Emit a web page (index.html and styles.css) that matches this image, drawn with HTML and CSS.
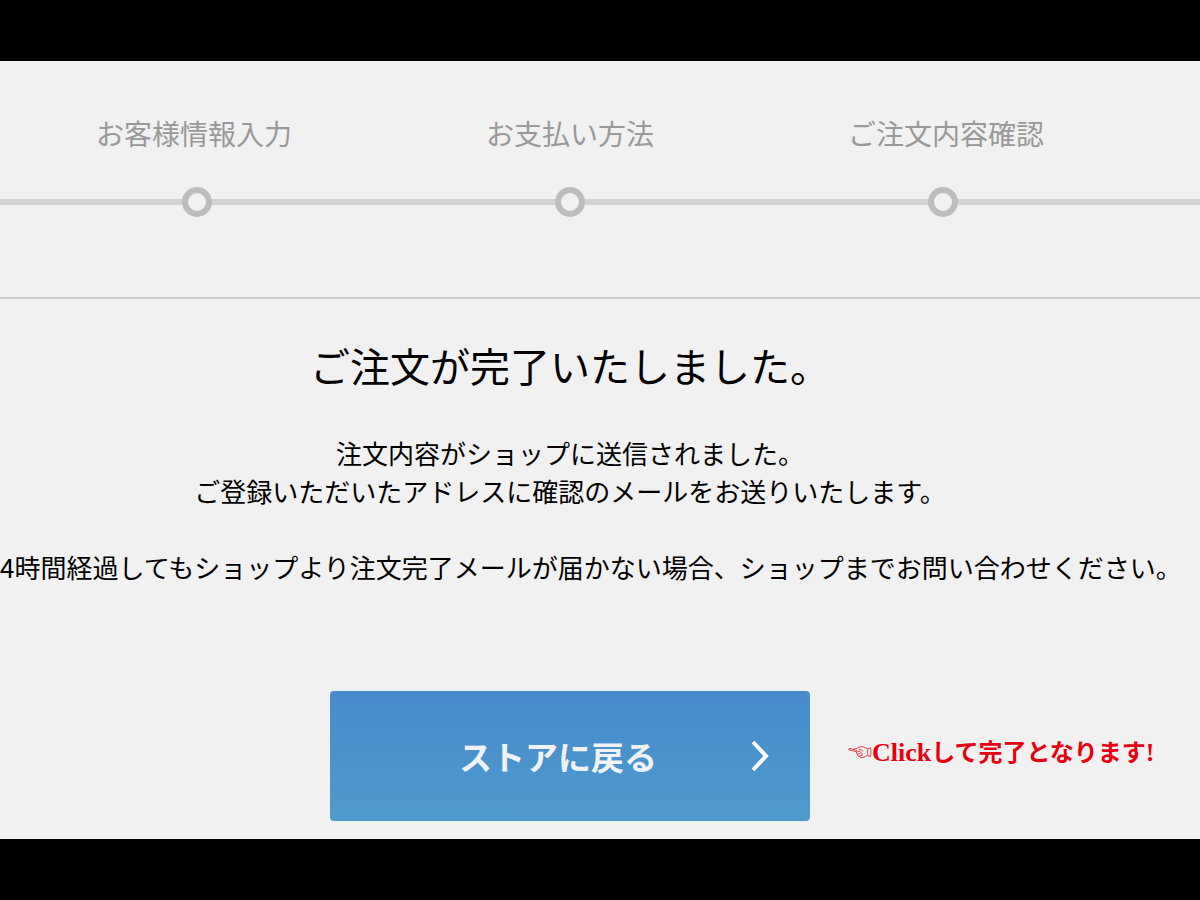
FILE: index.html
```html
<!DOCTYPE html>
<html lang="ja">
<head>
  <meta charset="UTF-8" />
  <meta name="viewport" content="width=device-width, initial-scale=1.0" />
  <title>ご注文完了</title>
  <link rel="stylesheet" href="styles.css">
</head>
<body>
  <main class="page">
    <header class="progress">
      <ol class="step-labels">
        <li>お客様情報入力</li>
        <li>お支払い方法</li>
        <li>ご注文内容確認</li>
      </ol>
      <div class="step-line">
        <span class="dot"></span>
        <span class="dot"></span>
        <span class="dot"></span>
      </div>
    </header>

    <section class="complete">
      <h1>ご注文が完了いたしました。</h1>
      <p>注文内容がショップに送信されました。<br>ご登録いただいたアドレスに確認のメールをお送りいたします。</p>
      <p>4時間経過してもショップより注文完了メールが届かない場合、ショップまでお問い合わせください。</p>

      <div class="actions">
        <button type="button" class="back-button">
          <span>ストアに戻る</span>
          <svg class="arrow" viewBox="0 0 18 32" aria-hidden="true">
            <path d="M2 2 L15 16 L2 30" />
          </svg>
        </button>
        <div class="note">
          <svg class="hand" viewBox="0 0 24 14" aria-hidden="true">
            <path d="M9 5.500 L2 3.500 Q0 3.500 1 4.800 L8.500 6.800 M5 4.300 Q9 4 11 2 Q14 0.600 18 3 L19.500 4 M8.500 6.800 Q7.500 8.500 9.500 9 Q8.800 11 11 11.200 Q11.500 13 14 12.600 Q17 12 19.500 10.500 M9.500 9 L12.500 8.500 M11 11.200 L14 10.300 M9 6.800 Q12 5.500 13 7.500 Q15 8.500 14 10.300 M11 4.500 Q14 4 15 6.500 M20 3.500 Q18.500 7 20 11 M20 3.500 L22.500 3 Q23.500 7 22.500 11.500 L20 11" />
          </svg>
          <span><span class="click">Click</span>して完了となります<span class="click">!</span></span>
        </div>
      </div>
    </section>
  </main>
</body>
</html>
```

FILE: styles.css
```css
* {
  margin: 0;
  padding: 0;
  box-sizing: border-box;
}
body {
  background: black;
  color: black;
  font-family: "Noto Sans CJK JP", sans-serif;
}
.page {
  margin: 61px 0;
  background: #f1f1f1;
  overflow: hidden;
}
.progress {
  height: 238px;
  padding-top: 51px;
  border-bottom: 2px solid #ccc;
}
.step-labels {
  display: grid;
  grid-template-columns: repeat(3, 1fr);
  padding: 0 66px 0 6px;
  list-style: none;
  color: #999;
  font-size: 28px;
  line-height: 42px;
  text-align: center;
  white-space: nowrap;
}
.step-line {
  display: grid;
  grid-template-columns: repeat(3, 1fr);
  justify-items: center;
  margin-top: 33px;
  padding: 0 70px 0 10px;
  background: linear-gradient(#d3d3d3, #d3d3d3) center / 100% 6px no-repeat;
}
.dot {
  width: 30px;
  height: 30px;
  border: 6px solid #bdbdbd;
  border-radius: 50%;
  background: #f1f1f1;
}
.complete {
  padding: 36px 60px 18px 0;
  text-align: center;
  white-space: nowrap;
}
h1 {
  margin-bottom: 39px;
  font-size: 40px;
  font-weight: 400;
  line-height: 60px;
}
p {
  margin-bottom: 38px;
  font-size: 26px;
  line-height: 38px;
}
.actions {
  display: grid;
  grid-template-columns: minmax(0, 1fr) auto minmax(0, 1fr);
  align-items: center;
  column-gap: 38px;
  margin-top: 105px;
}
.back-button {
  grid-column: 2;
  display: flex;
  align-items: center;
  justify-content: space-between;
  width: 480px;
  height: 130px;
  padding: 0 41px 0 129px;
  border: none;
  border-radius: 4px;
  background: linear-gradient(#478bcc, #4f9ace);
  color: #f0f2f6;
  font-family: inherit;
  font-size: 33px;
  font-weight: 700;
  cursor: pointer;
}
.arrow {
  width: 18px;
  height: 32px;
  fill: none;
  stroke: white;
  stroke-width: 4;
}
.note {
  display: flex;
  align-items: center;
  padding-bottom: 9px;
  color: #e60012;
  font-size: 24px;
  font-weight: 700;
  line-height: 36px;
}
.click {
  font-family: "Liberation Serif", serif;
  font-size: 26px;
}
.hand {
  flex: none;
  width: 24px;
  height: 14px;
  fill: none;
  stroke: #e60012;
  stroke-width: 0.7;
}
```
